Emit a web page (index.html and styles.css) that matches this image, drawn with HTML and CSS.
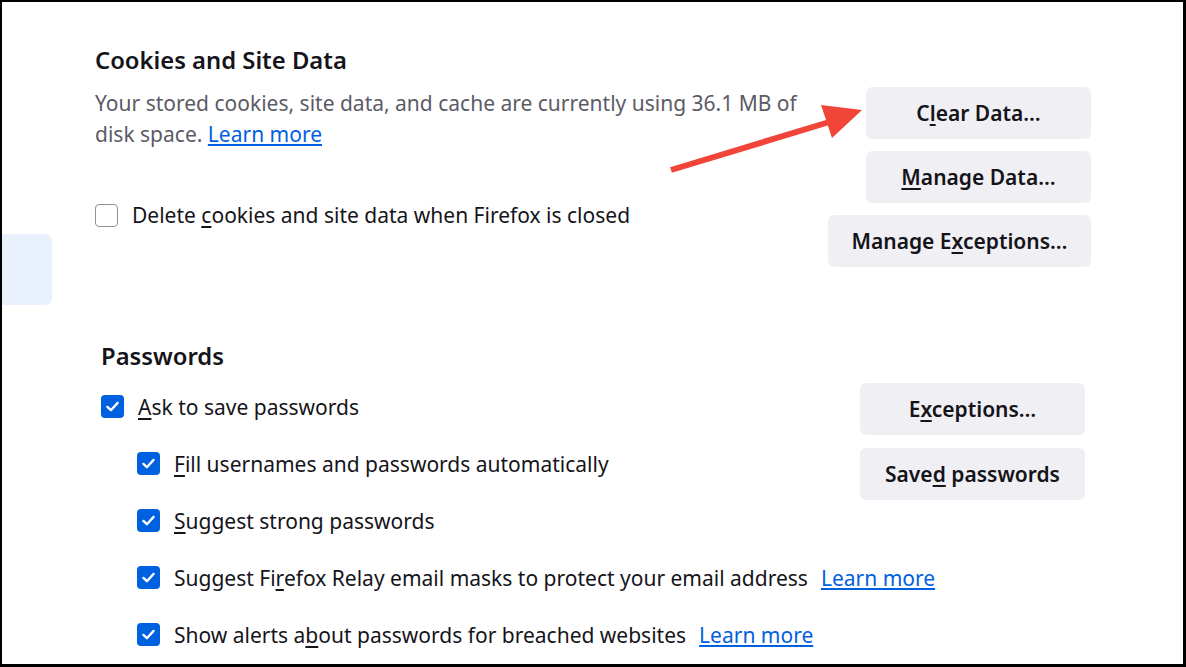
FILE: index.html
```html
<!DOCTYPE html>
<html lang="en">
<head>
<meta charset="utf-8">
<title>Privacy settings</title>
<link rel="stylesheet" href="styles.css">
</head>
<body>
  <aside class="sidebar">
    <div class="side-item"></div>
  </aside>
  <main class="main">
    <section class="cookies">
      <h2 class="heading">Cookies and Site Data</h2>
      <div class="cookie-row">
        <div class="cookie-text">
          <p class="desc"><span>Your stored cookies, site data, and cache are currently using 36.1 MB of</span> <span>disk space.</span> <a class="link" href="#">Learn more</a></p>
          <label class="check-row cookie-check">
            <span class="box"></span>
            <span class="label">Delete <u>c</u>ookies and site data when Firefox is closed</span>
          </label>
        </div>
        <div class="btn-col">
          <button class="btn btn-w">C<u>l</u>ear Data…</button>
          <button class="btn btn-w"><u>M</u>anage Data…</button>
          <button class="btn btn-wide">Manage E<u>x</u>ceptions…</button>
        </div>
      </div>
    </section>

    <section class="passwords">
      <h2 class="heading">Passwords</h2>
      <div class="pw-grid">
        <label class="check-row">
          <span class="box checked"><svg viewBox="0 0 16 16" class="tick"><path d="M3.2 8.4 L6.5 11.5 L12.8 4.6" /></svg></span>
          <span class="label"><u>A</u>sk to save passwords</span>
        </label>
        <div class="btn-col pw-btns">
          <button class="btn btn-w">E<u>x</u>ceptions…</button>
          <button class="btn btn-w">Save<u>d</u> passwords</button>
        </div>
        <label class="check-row sub">
          <span class="box checked"><svg viewBox="0 0 16 16" class="tick"><path d="M3.2 8.4 L6.5 11.5 L12.8 4.6" /></svg></span>
          <span class="label"><u>F</u>ill usernames and passwords automatically</span>
        </label>
        <label class="check-row sub">
          <span class="box checked"><svg viewBox="0 0 16 16" class="tick"><path d="M3.2 8.4 L6.5 11.5 L12.8 4.6" /></svg></span>
          <span class="label"><u>S</u>uggest strong passwords</span>
        </label>
        <label class="check-row sub full">
          <span class="box checked"><svg viewBox="0 0 16 16" class="tick"><path d="M3.2 8.4 L6.5 11.5 L12.8 4.6" /></svg></span>
          <span class="label">Suggest Fi<u>r</u>efox Relay email masks to protect your email address</span>
          <a class="link more" href="#">Learn more</a>
        </label>
        <label class="check-row sub full">
          <span class="box checked"><svg viewBox="0 0 16 16" class="tick"><path d="M3.2 8.4 L6.5 11.5 L12.8 4.6" /></svg></span>
          <span class="label">Show alerts a<u>b</u>out passwords for breached websites</span>
          <a class="link more" href="#">Learn more</a>
        </label>
      </div>
    </section>
  </main>

  <svg class="arrow" width="1186" height="667" viewBox="0 0 1186 667">
    <line x1="671" y1="170" x2="836" y2="120" />
    <polygon points="862,110 821,105 832,138" />
  </svg>
</body>
</html>
```

FILE: styles.css
```css
* { box-sizing: border-box; }

html, body { margin: 0; padding: 0; }

body {
  position: relative;
  width: 1186px;
  height: 667px;
  overflow: hidden;
  background: #ffffff;
  border-style: solid;
  border-color: #000000;
  border-width: 2px 3px 3px 2px;
  display: flex;
  font-family: "Noto Sans", "Open Sans", sans-serif;
  font-size: 21px;
  color: #15141a;
}

.sidebar {
  width: 50px;
  flex: none;
  padding-top: 232px;
}

.side-item {
  height: 71px;
  background: #e9f1fc;
  border-radius: 0 7px 7px 0;
}

.main {
  flex: 1;
  min-width: 0;
  padding-top: 43px;
}

.heading {
  margin: 0;
  font-size: 23.8px;
  font-weight: 600;
  line-height: 30px;
}

.cookies {
  padding-left: 43px;
  padding-right: 92px;
}

.cookie-row {
  display: flex;
  justify-content: space-between;
  margin-top: 12px;
}

.cookie-text {
  flex: 1;
  min-width: 0;
}

.desc {
  margin: 0;
  width: 725px;
  color: #5b5b66;
  font-size: 21px;
  line-height: 31px;
  padding-top: 1px;
}

.link {
  color: #0061e0;
  text-decoration: underline;
  text-underline-offset: 2px;
}

.check-row {
  display: flex;
  align-items: center;
  gap: 14px;
}

.cookie-check {
  margin-top: 53px;
  height: 24px;
}

.box {
  width: 23px;
  height: 23px;
  flex: none;
  border: 1.5px solid #8f8f9d;
  border-radius: 4px;
  background: #ffffff;
  display: flex;
  align-items: center;
  justify-content: center;
}

.box.checked {
  border: none;
  background: #0061e0;
}

.tick {
  width: 17px;
  height: 17px;
  fill: none;
  stroke: #ffffff;
  stroke-width: 2.2;
  stroke-linecap: round;
  stroke-linejoin: round;
}

.label u, .btn u { text-underline-offset: 3px; }

.btn-col {
  flex: none;
  display: flex;
  flex-direction: column;
  align-items: flex-end;
  gap: 12px;
}

.btn {
  height: 52px;
  border: none;
  border-radius: 6px;
  background: #f0f0f4;
  color: #15141a;
  font-family: inherit;
  font-size: 21px;
  font-weight: 600;
  padding: 0 20px;
}

.btn-w { width: 225px; }
.btn-wide { width: 263px; }

.passwords {
  margin-top: 74px;
  padding-left: 49px;
  padding-right: 98px;
}

.pw-grid {
  margin-top: 7px;
  display: grid;
  grid-template-columns: 1fr 225px;
  grid-auto-rows: 57px;
}

.pw-btns {
  grid-column: 2;
  grid-row: 1 / span 3;
  padding-top: 5px;
  gap: 13px;
}

.sub { padding-left: 36px; grid-column: 1; }
.full { grid-column: 1 / -1; }

.more { margin-left: -1px; }

.arrow {
  position: absolute;
  left: -2px;
  top: -2px;
  pointer-events: none;
}

.arrow line {
  stroke: #f2453a;
  stroke-width: 6;
}

.arrow polygon { fill: #f2453a; }
```
